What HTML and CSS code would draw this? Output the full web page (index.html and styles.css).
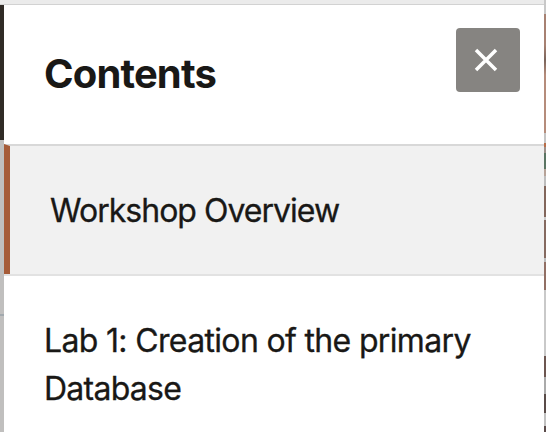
FILE: index.html
```html
<!DOCTYPE html>
<html lang="en">
<head>
<meta charset="utf-8">
<title>Contents</title>
<link rel="stylesheet" href="styles.css">
</head>
<body>
<div class="window">
  <div class="toolbar"></div>
  <div class="view">
    <div class="backdrop-left"></div>
    <aside class="panel">
      <header class="panel-header">
        <h1><span class="title">Contents</span></h1>
        <button class="close" aria-label="Close">
          <svg width="24" height="24" viewBox="0 0 24 24"><path d="M2 2L22 22M22 2L2 22" fill="none" stroke="#fff" stroke-width="3.5"/></svg>
        </button>
      </header>
      <nav>
        <a class="item selected"><span class="overview">Workshop Overview</span></a>
        <a class="item"><span class="lab">Lab 1: Creation of the primary</span><br><span class="database">Database</span></a>
      </nav>
    </aside>
  </div>
  <div class="backdrop-right"></div>
</div>
</body>
</html>
```
FILE: styles.css
```css
* { box-sizing: border-box; }
body {
  margin: 0;
  overflow: hidden;
  font-family: Inter, "Liberation Sans", sans-serif;
  color: #191816;
}
.window {
  display: grid;
  grid-template: 5px 427px / 544px 2px;
  width: 546px;
  height: 432px;
}
.toolbar {
  background: #ebebeb;
  border-bottom: 1px solid #d2d2d2;
}
.view { grid-row: 2; display: flex; }
.backdrop-left {
  width: 4px;
  background: linear-gradient(#302b26 135px, #c0bfbe 135px 309px, #a2a9ae 309px 311px, #c0bfbe 311px);
}
.panel { width: 540px; background: #fff; }
.panel-header {
  display: flex;
  justify-content: space-between;
  height: 139px;
  padding: 23px 24px 0 40px;
}
h1 {
  margin: 22px 0 0;
  font-size: 40px;
  line-height: 48px;
  font-weight: 700;
}
.title { letter-spacing: -0.85px; }
.close {
  display: flex;
  align-items: center;
  justify-content: center;
  width: 64px;
  height: 64px;
  padding: 0 4px 0 0;
  border: 0;
  border-radius: 4px;
  background: #868481;
}
.item {
  display: block;
  padding: 41px 40px 0;
  border-top: 2px solid #e2e2e2;
  font-size: 32px;
  line-height: 48px;
  white-space: nowrap;
  -webkit-text-stroke: 0.3px #191816;
}
.selected {
  height: 130px;
  background: #f1f1f1;
  border-top: 2px solid #d8d8d8;
  border-left: 6px solid #a65c38;
}
.overview { letter-spacing: -0.98px; }
.lab { letter-spacing: -0.66px; }
.database { letter-spacing: -0.75px; }
.backdrop-right {
  grid-row: 1 / 3;
  grid-column: 2;
  background: linear-gradient(#c8c8c8 14px, #a78172 14px 45px, #79645b 60px, #b58c7b 75px 133px, #c4c4c4 133px 143px, #b96d48 143px 147px, #9b8f89 147px 153px, #5b7563 153px 169px, #b7a398 169px 176px, #bdbdbd 176px 186px, #82665b 186px 217px, #ccc 217px 220px, #856a60 220px 258px, #bbb 258px 262px, #916f64 262px 290px, #c9c9c9 290px 356px, #6c5650 356px 377px, #aaa 377px 394px, #594b48 394px 413px, #c0c0c0 413px 426px, #5b4c4b 426px);
}
```
